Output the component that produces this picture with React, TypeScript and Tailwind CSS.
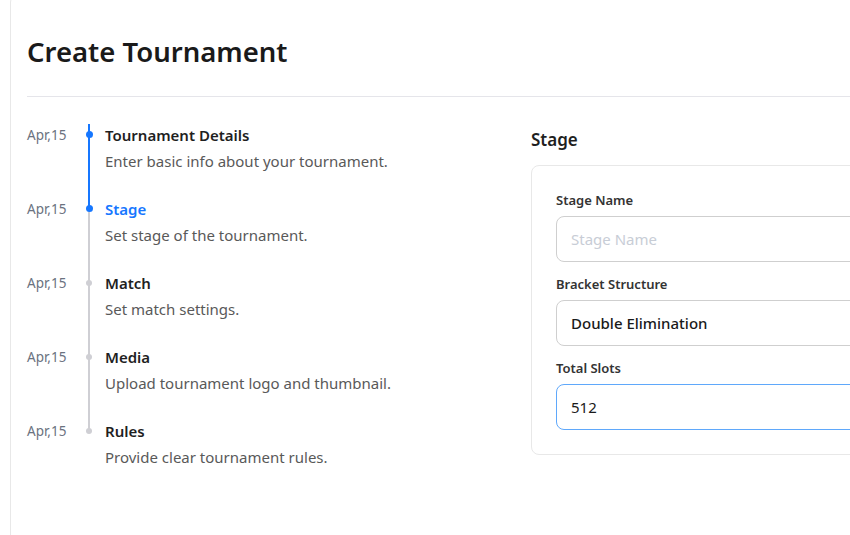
const steps = [
  { title: "Tournament Details", desc: "Enter basic info about your tournament.", state: "done" },
  { title: "Stage", desc: "Set stage of the tournament.", state: "active" },
  { title: "Match", desc: "Set match settings.", state: "todo" },
  { title: "Media", desc: "Upload tournament logo and thumbnail.", state: "todo" },
  { title: "Rules", desc: "Provide clear tournament rules.", state: "todo" },
];

const Timeline = () => {
  return (
    <div className="flex flex-col">
      {steps.map((s, i) => {
        const last = i === steps.length - 1;
        const lineBlue = s.state === "done";
        return (
          <div key={s.title} className="flex">
            <div className="w-[54px] pt-[1px] text-[13.5px] text-[#6b7280] leading-[18px]">Apr,15</div>
            <div className="relative w-[16px] flex justify-center">
              {i === 0 && <div className="absolute top-[-1px] h-[11px] w-[2px] bg-[#1677ff]" />}
              {!last && (
                <div
                  className={`absolute top-[10px] bottom-[-10px] w-[2px] ${lineBlue ? "bg-[#1677ff]" : "bg-[#cfcfd4]"}`}
                />
              )}
              {s.state === "todo" ? (
                <div className="relative mt-[7px] h-[6px] w-[6px] rounded-full bg-[#cfcfd4]" />
              ) : (
                <div className="relative mt-[6px] h-[7px] w-[7px] rounded-full bg-[#1677ff]" />
              )}
            </div>
            <div className={`pl-[8px] ${last ? "" : "pb-[28px]"}`}>
              <div
                className={`text-[15px] leading-[20px] font-semibold ${s.state === "active" ? "text-[#1677ff]" : "text-[#1f1f1f]"}`}
              >
                {s.title}
              </div>
              <div className="mt-[6px] text-[15px] leading-[20px] text-[#595959]">{s.desc}</div>
            </div>
          </div>
        );
      })}
    </div>
  );
};

const Field = ({ label, children }: { label: string; children: React.ReactNode }) => (
  <div className="flex flex-col">
    <label className="text-[13px] leading-[18px] font-semibold text-[#333]">{label}</label>
    {children}
  </div>
);

export default function App() {
  return (
    <div
      className="h-[535px] w-[850px] overflow-hidden bg-white"
      style={{ fontFamily: '"Noto Sans", "Open Sans", sans-serif' }}
    >
      <div className="ml-[10px] mt-[-6px] h-[600px] w-[900px] rounded-lg border border-[#e8e8e8] bg-white pl-[16px]">
        <h1 className="pt-[38px] text-[27.5px] leading-[38px] font-semibold text-[#1a1a1a]">Create Tournament</h1>
        <div className="mt-[25px] h-px bg-[#e5e5ea]" />
        <div className="mt-[28px] flex">
          <div className="w-[504px]">
            <Timeline />
          </div>
          <div className="w-[360px]">
            <h2 className="pt-[3px] text-[17px] leading-[24px] font-semibold text-[#1f1f1f]">Stage</h2>
            <div className="mt-[13px] rounded-lg border border-[#e8e8e8] px-[24px] pt-[25px] pb-[24px]">
              <div className="flex flex-col gap-[13px]">
                <Field label="Stage Name">
                  <input
                    placeholder="Stage Name"
                    className="mt-[7px] h-[46px] rounded-lg border border-[#cfcfcf] px-[14px] text-[15px] text-[#1f1f1f] placeholder:text-[#c8cdd6] outline-none"
                  />
                </Field>
                <Field label="Bracket Structure">
                  <div className="mt-[7px] flex h-[46px] items-center rounded-lg border border-[#cfcfcf] px-[14px] text-[15px] font-medium text-[#1a1a1a]">
                    Double Elimination
                  </div>
                </Field>
                <Field label="Total Slots">
                  <input
                    defaultValue="512"
                    className="mt-[7px] h-[46px] rounded-lg border border-[#5fa8fb] px-[14px] text-[15px] text-[#1a1a1a] outline-none"
                  />
                </Field>
              </div>
            </div>
          </div>
        </div>
      </div>
    </div>
  );
}
